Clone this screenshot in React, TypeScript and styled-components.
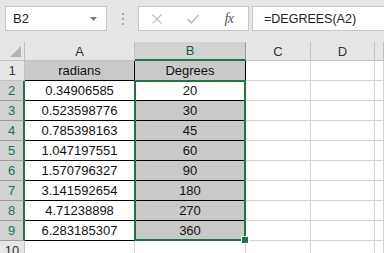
import React from 'react';
import styled, { createGlobalStyle } from 'styled-components';

const GlobalStyle = createGlobalStyle`
    html, body {
        margin: 0;
        padding: 0;
        background: #ffffff;
    }
    body {
        font-family: 'Liberation Sans', Arial, sans-serif;
        width: 384px;
        height: 253px;
        overflow: hidden;
    }
`;

const GREEN = '#217346';

const Page = styled.div`
    width: 384px;
    height: 253px;
    overflow: hidden;
    background: #e6e6e6;
`;

const FormulaBar = styled.div`
    display: flex;
    align-items: center;
    height: 42px;
    padding: 6px 0 0 5px;
    box-sizing: border-box;
    align-items: flex-start;
`;

const Box = styled.div<{ $width?: number }>`
    display: flex;
    align-items: center;
    height: 25px;
    box-sizing: border-box;
    background: #ffffff;
    border: 1px solid #c6c6c6;
    width: ${p => (p.$width ? `${p.$width}px` : 'auto')};
    flex: ${p => (p.$width ? 'none' : '1')};
`;

const NameText = styled.span`
    flex: 1;
    padding-left: 7px;
    font-size: 13px;
    color: #222;
`;

const Dots = styled.div`
    width: 31px;
    display: flex;
    flex-direction: column;
    align-items: center;
    justify-content: center;
    gap: 3px;
    height: 25px;
    span {
        width: 2px;
        height: 2px;
        background: #a8a8a8;
    }
`;

const IconSlot = styled.div`
    width: 36px;
    display: flex;
    align-items: center;
    justify-content: center;
`;

const Fx = styled.span`
    font-family: 'Liberation Serif', 'Times New Roman', serif;
    font-style: italic;
    font-size: 14px;
    color: #555;
    letter-spacing: -0.5px;
`;

const FormulaText = styled.span`
    padding-left: 11px;
    font-size: 12.5px;
    color: #222;
`;

const Sheet = styled.div`
    position: relative;
    display: grid;
    grid-template-columns: 25px 110px 111px 65px 64px 1fr;
    grid-auto-rows: 20px;
    grid-template-rows: 19px;
    background: #ffffff;
`;

const ColHead = styled.div<{ $active?: boolean }>`
    display: flex;
    align-items: center;
    justify-content: center;
    box-sizing: border-box;
    font-size: 13px;
    background: ${p => (p.$active ? '#d2d2d2' : '#e6e6e6')};
    color: ${p => (p.$active ? '#1e5c38' : '#333')};
    border-right: 1px solid ${p => (p.$active ? '#9b9b9b' : '#c2c2c2')};
    border-bottom: ${p => (p.$active ? `2px solid ${GREEN}` : '1px solid #c2c2c2')};
`;

const Corner = styled.div`
    position: relative;
    background: #e6e6e6;
    box-sizing: border-box;
    border-right: 1px solid #c2c2c2;
    border-bottom: 1px solid #c2c2c2;
`;

const CornerMark = styled.svg`
    position: absolute;
    right: 3px;
    bottom: 3px;
`;

const RowHead = styled.div<{ $active?: boolean }>`
    display: flex;
    align-items: center;
    justify-content: center;
    box-sizing: border-box;
    font-size: 13px;
    background: ${p => (p.$active ? '#d2d2d2' : '#e6e6e6')};
    color: ${p => (p.$active ? GREEN : '#333')};
    border-bottom: 1px solid ${p => (p.$active ? '#9b9b9b' : '#c2c2c2')};
    border-right: ${p => (p.$active ? `2px solid ${GREEN}` : '1px solid #c2c2c2')};
`;

const Cell = styled.div<{ $fill?: 'white' | 'header' | 'select'; $ruled?: boolean }>`
    display: flex;
    align-items: center;
    justify-content: center;
    box-sizing: border-box;
    font-size: 13px;
    color: #111;
    background: ${p =>
        p.$fill === 'header' || p.$fill === 'select' ? '#c9c9c9' : '#ffffff'};
    border-right: 1px solid ${p => (p.$ruled ? '#000' : '#d4d4d4')};
    border-bottom: 1px solid ${p => (p.$ruled ? '#000' : '#d4d4d4')};
`;

const Selection = styled.div`
    position: absolute;
    left: 134px;
    top: 38px;
    width: 112px;
    height: 161px;
    box-sizing: border-box;
    border: 2px solid ${GREEN};
    pointer-events: none;
`;

const Handle = styled.div`
    position: absolute;
    right: -5px;
    bottom: -5px;
    width: 6px;
    height: 6px;
    background: ${GREEN};
    border: 1px solid #ffffff;
`;

const rows: [string, string][] = [
    ['radians', 'Degrees'],
    ['0.34906585', '20'],
    ['0.523598776', '30'],
    ['0.785398163', '45'],
    ['1.047197551', '60'],
    ['1.570796327', '90'],
    ['3.141592654', '180'],
    ['4.71238898', '270'],
    ['6.283185307', '360'],
    ['', ''],
];

const App = () => (
    <Page>
        <GlobalStyle />
        <FormulaBar>
            <Box $width={102}>
                <NameText>B2</NameText>
                <svg width="22" height="10" viewBox="0 0 22 10">
                    <path d="M6 3 L13 3 L9.5 7 Z" fill="#7a7a7a" />
                </svg>
            </Box>
            <Dots>
                <span />
                <span />
                <span />
            </Dots>
            <Box $width={111}>
                <IconSlot>
                    <svg width="12" height="12" viewBox="0 0 12 12">
                        <path d="M1.5 1.5 L10.5 10.5 M10.5 1.5 L1.5 10.5" stroke="#c3c3c3" strokeWidth="1.3" />
                    </svg>
                </IconSlot>
                <IconSlot>
                    <svg width="14" height="12" viewBox="0 0 14 12">
                        <path d="M1.5 6 L5.5 10 L12.5 2" stroke="#c3c3c3" strokeWidth="1.8" fill="none" />
                    </svg>
                </IconSlot>
                <IconSlot>
                    <Fx>fx</Fx>
                </IconSlot>
            </Box>
            <Box style={{ marginLeft: 3, borderRight: 'none' }}>
                <FormulaText>=DEGREES(A2)</FormulaText>
            </Box>
        </FormulaBar>
        <Sheet>
            <Corner>
                <CornerMark width="11" height="11" viewBox="0 0 11 11">
                    <path d="M11 0 L11 11 L0 11 Z" fill="#b4b4b4" />
                </CornerMark>
            </Corner>
            <ColHead>A</ColHead>
            <ColHead $active>B</ColHead>
            <ColHead>C</ColHead>
            <ColHead>D</ColHead>
            <ColHead />
            {rows.map(([a, b], i) => {
                const n = i + 1;
                const inData = n <= 9;
                const selected = n >= 2 && n <= 9;
                return (
                    <React.Fragment key={n}>
                        <RowHead $active={selected}>{n}</RowHead>
                        <Cell $fill={n === 1 ? 'header' : 'white'} $ruled={inData}>
                            {a}
                        </Cell>
                        <Cell
                            $fill={n === 1 ? 'header' : n >= 3 && n <= 9 ? 'select' : 'white'}
                            $ruled={inData}
                        >
                            {b}
                        </Cell>
                        <Cell />
                        <Cell />
                        <Cell />
                    </React.Fragment>
                );
            })}
            <Selection>
                <Handle />
            </Selection>
        </Sheet>
    </Page>
);

export default App;
